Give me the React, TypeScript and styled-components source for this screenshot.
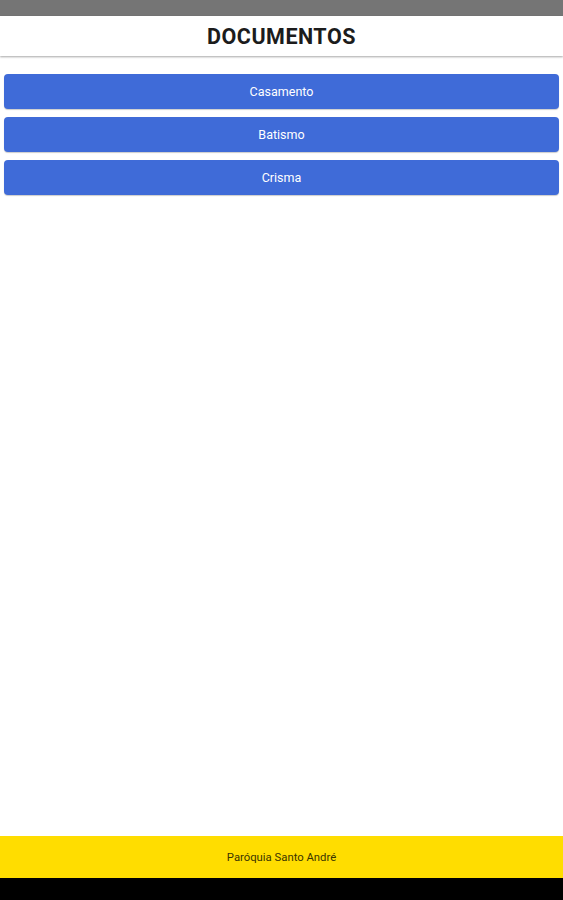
import React from "react";
import styled, { createGlobalStyle } from "styled-components";

const Global = createGlobalStyle`
  html, body { margin: 0; padding: 0; height: 100%; }
  body { font-family: Roboto, "Noto Sans", Arial, sans-serif; background: #fff; }
  #root { height: 100%; }
`;

const Screen = styled.div`
  height: 900px;
  display: flex;
  flex-direction: column;
  background: #fff;
`;

const StatusBar = styled.div`
  height: 16px;
  background: #757575;
  flex: none;
`;

const Header = styled.header`
  height: 40px;
  flex: none;
  display: flex;
  align-items: center;
  justify-content: center;
  background: #fff;
  box-shadow: 0 1px 2px rgba(0, 0, 0, 0.35);
  position: relative;
  z-index: 1;
`;

const Title = styled.h1`
  margin: 0;
  font-size: 21.5px;
  font-weight: 700;
  color: #1c1c1c;
  letter-spacing: 0.5px;
`;

const Content = styled.main`
  flex: 1;
  display: flex;
  flex-direction: column;
  gap: 8px;
  padding: 18px 4px 0;
`;

const MenuButton = styled.button`
  height: 35px;
  width: 100%;
  border: none;
  border-radius: 4px;
  background: #3f6bd8;
  color: #fff;
  font-family: Roboto, Arial, sans-serif;
  font-size: 12.5px;
  box-shadow: 0 1px 1px rgba(0, 0, 0, 0.2);
  cursor: pointer;
`;

const Footer = styled.footer`
  height: 42px;
  flex: none;
  display: flex;
  align-items: center;
  justify-content: center;
  background: #ffdd00;
  color: #3a3400;
  font-size: 11.3px;
`;

const NavBar = styled.div`
  height: 22px;
  flex: none;
  background: #000;
`;

export default function App() {
  const items = ["Casamento", "Batismo", "Crisma"];
  return (
    <>
      <Global />
      <Screen>
        <StatusBar />
        <Header>
          <Title>DOCUMENTOS</Title>
        </Header>
        <Content>
          {items.map((i) => (
            <MenuButton key={i}>{i}</MenuButton>
          ))}
        </Content>
        <Footer>Paróquia Santo André</Footer>
        <NavBar />
      </Screen>
    </>
  );
}
